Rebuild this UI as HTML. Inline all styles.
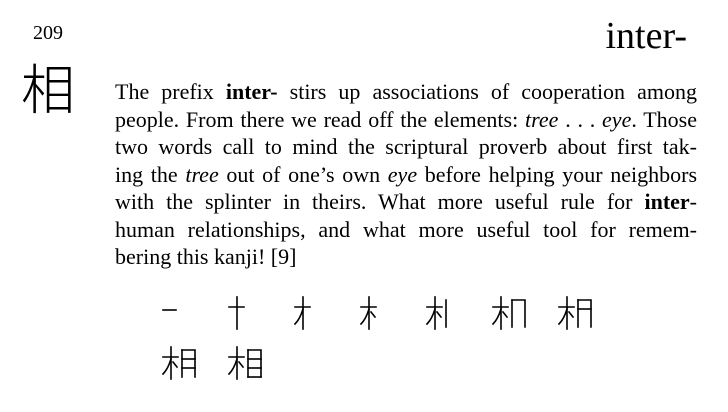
<!DOCTYPE html>
<html><head><meta charset="utf-8"><style>
body{margin:0;width:728px;height:412px;background:#fff;position:relative;overflow:hidden;font-family:"Liberation Serif",serif;color:#000}
.num{position:absolute;left:33px;top:22px;font-size:20px}
.title{position:absolute;right:41px;top:14px;font-size:38px}
.big{position:absolute;left:21px;top:56px;font-size:54px;line-height:60px;font-family:"Noto Sans CJK JP",sans-serif;font-weight:300}
.txt{position:absolute;left:115px;top:78px;width:582px;font-size:22px;line-height:27.5px}
.txt div{text-align:justify;text-align-last:justify;white-space:nowrap}
.txt div.l{text-align-last:left}
svg{position:absolute;left:0;top:0}
</style></head><body>
<div class="num">209</div>
<div class="title">inter-</div>
<div class="big">相</div>
<div class="txt">
<div>The prefix <b>inter-</b> stirs up associations of cooperation among</div>
<div>people. From there we read off the elements: <i>tree</i> . . . <i>eye</i>. Those</div>
<div>two words call to mind the scriptural proverb about first tak-</div>
<div>ing the <i>tree</i> out of one’s own <i>eye</i> before helping your neighbors</div>
<div>with the splinter in theirs. What more useful rule for <b>inter</b>-</div>
<div>human relationships, and what more useful tool for remem-</div>
<div class="l">bering this kanji! [9]</div>
</div>
<svg width="728" height="412" fill="none" stroke="#000" stroke-width="1.6" stroke-linecap="square">
<defs>
<g id="s1"><path d="M0 10H15"/></g>
<g id="s2"><use href="#s1"/><path d="M8 0V32"/></g>
<g id="s3"><use href="#s2"/><path d="M8 12Q5 22 0 27"/></g>
<g id="s4"><use href="#s3"/><path d="M10 15L14 20"/></g>
<g id="s5"><use href="#s4"/><path d="M19 3V30"/></g>
<g id="s6"><use href="#s5"/><path d="M19 3H32V30"/></g>
<g id="s7"><use href="#s6"/><path d="M19 12H32"/></g>
<g id="s8"><use href="#s7"/><path d="M19 21H32"/></g>
<g id="s9"><use href="#s8"/><path d="M19 30H32"/></g>
</defs>
<g transform="translate(163,297)"><path d="M0 13H13"/></g>
<use href="#s2" transform="translate(229,297)"/>
<use href="#s3" transform="translate(295,297)"/>
<use href="#s4" transform="translate(361,297)"/>
<use href="#s5" transform="translate(427,297)"/>
<use href="#s6" transform="translate(493,297)"/>
<use href="#s7" transform="translate(559,297)"/>
<use href="#s8" transform="translate(163,347)"/>
<use href="#s9" transform="translate(229,347)"/>
</svg>
</body></html>
